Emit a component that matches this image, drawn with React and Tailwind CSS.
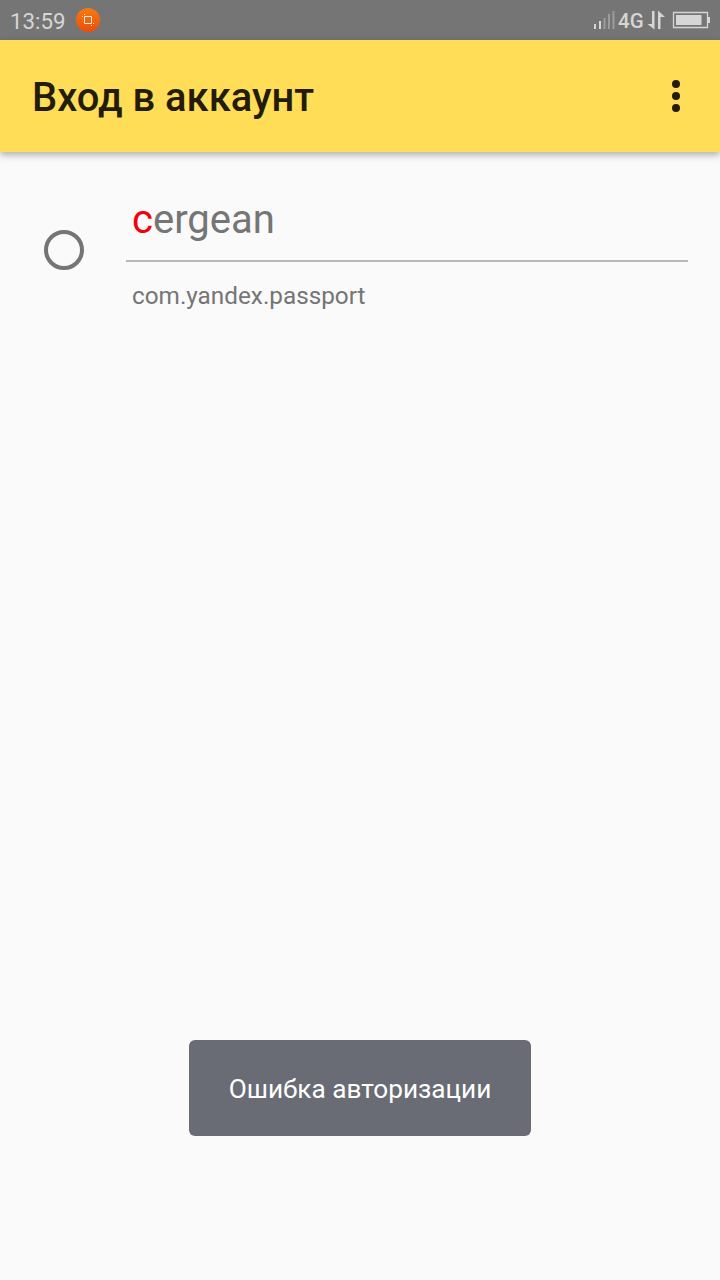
import React from 'react';

function StatusBar() {
  return (
    <div className="flex h-10 items-center justify-between bg-[#757575] text-[#d6d6d6]">
      <div className="flex items-center pl-[10px]">
        <span className="w-[57px] pt-[2px] text-[22.300px] leading-10">13:59</span>
        <svg className="ml-[9px]" width="24" height="24" viewBox="0 0 24 24" fill="none">
          <defs>
            <linearGradient id="crop" x1="0" y1="0" x2="0" y2="1">
              <stop offset="0" stopColor="#f27c12" />
              <stop offset="1" stopColor="#ec4d0c" />
            </linearGradient>
          </defs>
          <circle cx="12" cy="12" r="12" fill="url(#crop)" />
          <path d="M8.500 8.500h7v7h-7zM6 8.500h1M8.500 6v1M17 15.500h1M15.500 17v1" stroke="#ffe8d8" strokeWidth="1" />
        </svg>
      </div>
      {/* Signal, network, battery */}
      <div className="flex items-center pr-[10px]">
        <svg width="22" height="40" viewBox="0 0 22 40" fill="none" strokeWidth="2">
          <path d="M2 24v5M7 21v8" stroke="#d6d6d6" />
          <path d="M11.500 18v11M16 14v15M20.500 11v18" stroke="#9c9c9c" />
        </svg>
        <span className="ml-[3px] w-[28px] pt-px text-[20.500px] font-medium leading-10">4G</span>
        <svg width="20" height="40" viewBox="0 0 20 40" fill="#d6d6d6">
          <path d="M6 11h2.500v18.500L1.500 24H6zM12 29V10.500l7 6.500h-4.500v12z" />
        </svg>
        <svg className="ml-[6px]" width="38" height="40" viewBox="0 0 38 40" fill="none">
          <path d="M1.500 12.500h34v15h-34z" stroke="#d6d6d6" strokeWidth="1.300" />
          <path d="M4 15h25.500v10H4zM36 17h2v6h-2z" fill="#d6d6d6" />
        </svg>
      </div>
    </div>
  );
}

function App() {
  return (
    <div className="flex h-[1280px] w-[720px] flex-col bg-[#fafafa] font-['Roboto',sans-serif]">
      <StatusBar />
      <div className="flex h-28 items-center justify-between bg-[#ffdd57] pl-8 pr-10 shadow-[0_3px_7px_rgba(0,0,0,0.3)]">
        <h1 className="pt-1 text-[39.900px] font-medium text-[#231c0a]">Вход в аккаунт</h1>
        <svg width="8" height="32" viewBox="0 0 8 32" fill="#231c0a">
          <circle cx="4" cy="4" r="4" />
          <circle cx="4" cy="16" r="4" />
          <circle cx="4" cy="28" r="4" />
        </svg>
      </div>
      {/* Account */}
      <div className="flex pl-11 pr-8 pt-8">
        <div className="mt-[46px] size-10 rounded-full border-4 border-[#757575]" />
        <div className="ml-[42px] flex-1">
          <div className="h-[78px] border-b-2 border-[#b8b8b8] pl-[6px] text-[40px] leading-[72px] text-[#757575]">
            <span className="text-[#f2000c]">c</span>ergean
          </div>
          <div className="pl-[6px] pt-[20px] text-[24.300px] leading-[28px] text-[#757575]">com.yandex.passport</div>
        </div>
      </div>
      {/* Toast */}
      <div className="mx-auto mb-36 mt-auto flex h-24 w-[342px] items-center justify-center rounded-md bg-[#696c74] pt-[4px] text-[26.200px] text-white">
        Ошибка авторизации
      </div>
    </div>
  );
}

export default App;
